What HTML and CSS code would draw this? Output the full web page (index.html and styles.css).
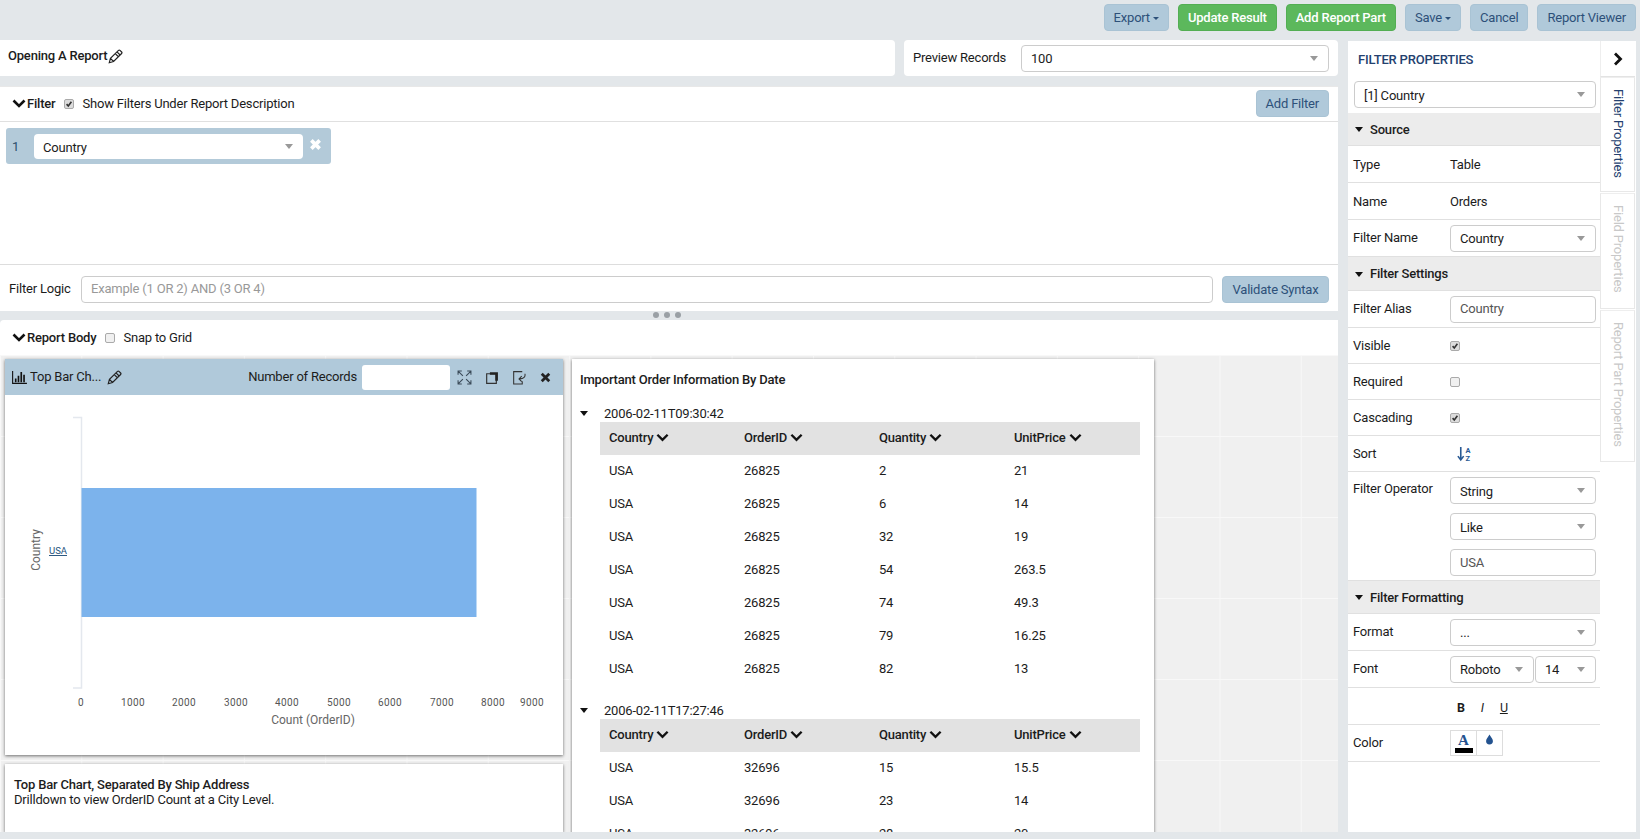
FILE: index.html
```html
<!DOCTYPE html>
<html lang="en">
<head>
<meta charset="utf-8">
<title>Report Designer</title>
<link rel="stylesheet" href="styles.css">
</head>
<body>
<svg class="defs" width="0" height="0" aria-hidden="true">
  <symbol id="chev" viewBox="0 0 14 10"><path d="M1.5 1.5 7 7l5.5-5.5" fill="none" stroke="currentColor" stroke-width="2.6"/></symbol>
  <symbol id="pencil" viewBox="0 0 14 14"><path d="M1.2 12.8 2.300 8.800 9.800 1.300a1 1 0 0 1 1.400 0l1.500 1.500a1 1 0 0 1 0 1.400L5.200 11.700zM2.300 8.800 5.200 11.700M8.400 2.700l2.900 2.900M6.800 4.300l2.900 2.900" fill="none" stroke="currentColor" stroke-width="1.100"/></symbol>
  <symbol id="check" viewBox="0 0 10 10"><path d="M2 5.200 4.100 7.500 8 2.200" fill="none" stroke="#333" stroke-width="2"/></symbol>
</svg>

<header class="topbar">
  <button class="btn">Export<i class="mini-caret"></i></button>
  <button class="btn btn-green">Update Result</button>
  <button class="btn btn-green">Add Report Part</button>
  <button class="btn">Save<i class="mini-caret"></i></button>
  <button class="btn">Cancel</button>
  <button class="btn">Report Viewer</button>
</header>

<main class="main">
  <section class="left">
    <div class="title-row">
      <div class="card title-card"><b>Opening A Report</b><svg class="ic15"><use href="#pencil"/></svg></div>
      <div class="card preview-card">
        <span class="preview-label">Preview Records</span>
        <div class="sel sel-preview"><span>100</span><i class="caret"></i></div>
      </div>
    </div>

    <div class="card filter-card">
      <div class="sec-head filter-head">
        <svg class="chev"><use href="#chev"/></svg><b class="sec-title">Filter</b>
        <span class="cb on cb-gap"><svg><use href="#check"/></svg></span>
        <span>Show Filters Under Report Description</span>
        <button class="btn btn-right">Add Filter</button>
      </div>
      <div class="filter-body">
        <div class="chip">
          <span class="chip-num">1</span>
          <div class="sel sel-chip"><span>Country</span><i class="caret"></i></div>
          <svg class="chip-x" viewBox="0 0 10 10"><path d="M1.800 1.800l6.400 6.400M8.200 1.800l-6.400 6.400" stroke="#fff" stroke-width="2.800" fill="none"/></svg>
        </div>
      </div>
      <div class="logic-row">
        <span class="logic-label">Filter Logic</span>
        <div class="input logic-input">Example (1 OR 2) AND (3 OR 4)</div>
        <button class="btn">Validate Syntax</button>
      </div>
    </div>

    <div class="handle"><i></i><i></i><i></i></div>

    <div class="card report-card">
      <div class="sec-head report-head">
        <svg class="chev"><use href="#chev"/></svg><b class="sec-title">Report Body</b>
        <span class="cb cb-gap"></span>
        <span>Snap to Grid</span>
      </div>
      <div class="canvas">
        <div class="col-a">
          <div class="part chart-part">
            <div class="part-head">
              <svg class="bar-ic" viewBox="0 0 16 14"><path d="M.6 0v13.300H16" fill="none" stroke="#111" stroke-width="1.200"/><path d="M3 8h1.800v4H3zM6 5h1.800v7H6zM9 1h1.800v11H9zM12 4h1.800v8H12z" fill="#111"/></svg>
              <span class="part-name">Top Bar Ch...</span>
              <svg class="ic15 part-pencil"><use href="#pencil"/></svg>
              <span class="records">Number of Records</span>
              <div class="rec-input"></div>
              <svg class="tool first" viewBox="0 0 14 14"><path d="M5.500 5.500 1 1M1 4.500V1h3.500M8.500 5.500 13 1M9.500 1H13v3.500M5.500 8.500 1 13M1 9.500V13h3.500M8.500 8.500 13 13M13 9.500V13H9.500" fill="none" stroke="#3a4a58" stroke-width="1"/></svg>
              <svg class="tool" viewBox="0 0 14 14"><path d="M2.500 3.500h9v9h-9z" fill="none" stroke="#333" stroke-width="1.100"/><path d="M5.500 2h7.500v8h-2.500V4.500h-5z" fill="#222"/></svg>
              <svg class="tool" viewBox="0 0 14 14"><path d="M10.500 1.500H2.500v11.500h8v-2.500" fill="none" stroke="#333" stroke-width="1"/><path d="M13 3.500c.600 2.800-1 4.800-5 4.800M10 5.800 7.500 8.300l2.500 2.500" fill="none" stroke="#333" stroke-width="1"/></svg>
              <svg class="tool" viewBox="0 0 14 14"><path d="M3.500 3.500l7 7M10.500 3.500l-7 7" stroke="#222" stroke-width="2.600" fill="none"/></svg>
            </div>
            <svg class="chart" viewBox="0 0 558 360">
              <path d="M68 22.500h8.500V293H68" fill="none" stroke="#e4e8ee" stroke-width="1.500"/>
              <rect x="76.500" y="93" width="395" height="129" fill="#7cb3ec"/>
              <text class="c-link" x="53" y="159" text-anchor="middle">USA</text>
              <text class="c-title" transform="translate(35 155) rotate(-90)" text-anchor="middle">Country</text>
              <g class="c-tick" text-anchor="middle">
                <text x="76" y="311">0</text><text x="128" y="311">1000</text><text x="179" y="311">2000</text><text x="231" y="311">3000</text><text x="282" y="311">4000</text><text x="334" y="311">5000</text><text x="385" y="311">6000</text><text x="437" y="311">7000</text><text x="488" y="311">8000</text><text x="527" y="311">9000</text>
              </g>
              <text class="c-title" x="308" y="329" text-anchor="middle">Count (OrderID)</text>
            </svg>
          </div>
          <div class="part desc-part">
            <b>Top Bar Chart, Separated By Ship Address</b><br>
            Drilldown to view OrderID Count at a City Level.
          </div>
        </div>

        <div class="part table-part">
          <h3 class="t-title">Important Order Information By Date</h3>
          <div class="group">
            <div class="g-label"><i class="tri"></i>2006-02-11T09:30:42</div>
            <div class="t-grid t-head"><span>Country<svg class="chev-s"><use href="#chev"/></svg></span><span>OrderID<svg class="chev-s"><use href="#chev"/></svg></span><span>Quantity<svg class="chev-s"><use href="#chev"/></svg></span><span>UnitPrice<svg class="chev-s"><use href="#chev"/></svg></span></div>
            <div class="t-grid"><span>USA</span><span>26825</span><span>2</span><span>21</span></div>
            <div class="t-grid"><span>USA</span><span>26825</span><span>6</span><span>14</span></div>
            <div class="t-grid"><span>USA</span><span>26825</span><span>32</span><span>19</span></div>
            <div class="t-grid"><span>USA</span><span>26825</span><span>54</span><span>263.5</span></div>
            <div class="t-grid"><span>USA</span><span>26825</span><span>74</span><span>49.3</span></div>
            <div class="t-grid"><span>USA</span><span>26825</span><span>79</span><span>16.25</span></div>
            <div class="t-grid"><span>USA</span><span>26825</span><span>82</span><span>13</span></div>
          </div>
          <div class="group">
            <div class="g-label"><i class="tri"></i>2006-02-11T17:27:46</div>
            <div class="t-grid t-head"><span>Country<svg class="chev-s"><use href="#chev"/></svg></span><span>OrderID<svg class="chev-s"><use href="#chev"/></svg></span><span>Quantity<svg class="chev-s"><use href="#chev"/></svg></span><span>UnitPrice<svg class="chev-s"><use href="#chev"/></svg></span></div>
            <div class="t-grid"><span>USA</span><span>32696</span><span>15</span><span>15.5</span></div>
            <div class="t-grid"><span>USA</span><span>32696</span><span>23</span><span>14</span></div>
            <div class="t-grid"><span>USA</span><span>32696</span><span>28</span><span>20</span></div>
          </div>
        </div>
      </div>
    </div>
  </section>

  <aside class="panel">
    <div class="p-title">FILTER PROPERTIES</div>
    <div class="p-top"><div class="sel"><span>[1] Country</span><i class="caret"></i></div></div>

    <div class="p-sec"><i class="tri"></i>Source</div>
    <div class="p-row r37 r-src"><span>Type</span><span class="p-val">Table</span></div>
    <div class="p-row r37 r-src"><span>Name</span><span class="p-val">Orders</span></div>
    <div class="p-row r37"><span>Filter Name</span><div class="sel"><span>Country</span><i class="caret"></i></div></div>

    <div class="p-sec sec34"><i class="tri"></i>Filter Settings</div>
    <div class="p-row r37"><span>Filter Alias</span><div class="input muted">Country</div></div>
    <div class="p-row r36"><span>Visible</span><span class="cb on"><svg><use href="#check"/></svg></span></div>
    <div class="p-row r36"><span>Required</span><span class="cb"></span></div>
    <div class="p-row r36"><span>Cascading</span><span class="cb on"><svg><use href="#check"/></svg></span></div>
    <div class="p-row r36"><span>Sort</span>
      <svg class="sort-ic" viewBox="0 0 14 15"><path d="M3.500 1v11M.8 9.500l2.700 3.500 2.700-3.500" fill="none" stroke="#2a5a94" stroke-width="1.500"/><text x="8" y="6.500" class="sort-t">A</text><text x="8" y="14" class="sort-t">Z</text></svg>
    </div>
    <div class="p-row p-stack"><span class="stack-label">Filter Operator</span>
      <div class="stack">
        <div class="sel"><span>String</span><i class="caret"></i></div>
        <div class="sel"><span>Like</span><i class="caret"></i></div>
        <div class="input muted">USA</div>
      </div>
    </div>

    <div class="p-sec"><i class="tri"></i>Filter Formatting</div>
    <div class="p-row r37"><span>Format</span><div class="sel"><span>...</span><i class="caret"></i></div></div>
    <div class="p-row r37"><span>Font</span>
      <div class="font-pair">
        <div class="sel"><span>Roboto</span><i class="caret"></i></div>
        <div class="sel"><span>14</span><i class="caret"></i></div>
      </div>
    </div>
    <div class="p-row r37"><span></span>
      <div class="biu"><b>B</b><i>I</i><u>U</u></div>
    </div>
    <div class="p-row r37"><span>Color</span>
      <div class="swatches">
        <div class="swatch"><span class="sw-a">A</span></div>
        <div class="swatch"><svg class="drop" viewBox="0 0 10 12"><path d="M5 .5C6 3 8.800 5 8.800 7.800a3.800 3.800 0 0 1-7.600 0C1.200 5 4 3 5 .5z" fill="#23528f"/></svg></div>
      </div>
    </div>
  </aside>

  <nav class="tabs">
    <div class="tab-toggle"><svg class="toggle-ic" viewBox="0 0 10 14"><path d="M2 1.500 7.500 7 2 12.500" fill="none" stroke="#111" stroke-width="2.800"/></svg></div>
    <div class="tab active t115"><span>Filter Properties</span></div>
    <div class="tab t114"><span>Field Properties</span></div>
    <div class="tab t152"><span>Report Part Properties</span></div>
  </nav>
</main>
</body>
</html>
```
FILE: styles.css
```css
* { box-sizing: border-box; }
html, body { margin: 0; height: 839px; overflow: hidden; }
body { background: #e3e7ea; font: 13px/16px Roboto, "Liberation Sans", sans-serif; color: #1c1c1c; letter-spacing: -.2px; }
.defs { position: absolute; }
b { font-weight: 500; }

.topbar { height: 41px; display: flex; justify-content: flex-end; gap: 9px; padding: 4px 4px 0 0; align-items: flex-start; }
.btn { height: 27px; padding: 0 9px; border: 1px solid #a9c3d4; border-radius: 4px; background: #b0c9da; color: #2d5079; font: 13px Roboto, sans-serif; letter-spacing: -.2px; white-space: nowrap; }
.btn-green { background: #5cb85c; border-color: #53ae53; color: #fff; font-weight: 500; }
.mini-caret { display: inline-block; margin-left: 3px; border: 3px solid transparent; border-top-color: currentColor; border-bottom: 0; vertical-align: middle; }
.btn-right { margin-left: auto; }

.main { display: flex; height: 791px; }
.left { width: 1339px; display: flex; flex-direction: column; }
.panel { width: 252px; margin-left: 9px; background: #fff; display: flex; flex-direction: column; }
.tabs { width: 36px; background: #fff; display: flex; flex-direction: column; align-items: flex-start; }

.card { background: #fff; }
.title-row { display: flex; gap: 9px; height: 36px; margin-right: 1px; margin-top: -1px; }
.title-card { width: 895px; display: flex; align-items: center; gap: 1px; padding: 0 8px 4px; border-radius: 0 4px 4px 0; }
.preview-card { flex: 1; display: flex; align-items: center; padding: 0 9px; border-radius: 4px; }
.preview-label { width: 108px; }
.sel-preview { flex: 1; }
.ic15 { width: 15px; height: 15px; color: #222; flex: none; }

.sel, .input { height: 27px; border: 1px solid #ccc; border-radius: 4px; background: #fff; display: flex; align-items: center; padding: 0 9px; position: relative; width: 100%; }
.sel span { flex: 1; padding-top: 2px; }
.caret { width: 0; height: 0; border: 4.500px solid transparent; border-top: 5px solid #999; border-bottom: 0; margin-right: 1px; }
.muted { color: #555; }

.filter-card { margin: 10px 1px 0 0; height: 225px; border-top: 1px solid #e8e8e8; display: flex; flex-direction: column; }
.sec-head { display: flex; align-items: center; }
.chev { width: 14px; height: 10px; color: #111; margin-right: 1px; }
.sec-title { font-size: 13px; }
.filter-head { height: 35px; padding: 0 9px 1px 12px; border-bottom: 1px solid #e0e0e0; }
.cb { width: 10px; height: 10px; border: 1px solid #aaa; border-radius: 2px; background: #f0f0f0; display: inline-block; flex: none; }
.cb.on { background: #dcdcdc; }
.cb svg { display: block; width: 8px; height: 8px; }
.cb-gap { margin: 0 8px 0 9px; }

.filter-body { height: 143px; border-bottom: 1px solid #ddd; padding: 6px; }
.chip { width: 325px; height: 36px; background: #b3cad9; border-radius: 3px; display: flex; align-items: center; padding-top: 1px; }
.chip-num { width: 28px; padding-left: 6px; color: #2d4f6d; }
.sel-chip { width: 269px; height: 25px; border: 0; }
.chip-x { width: 13px; height: 13px; margin: -5px 0 0 6px; }

.logic-row { flex: 1; display: flex; align-items: center; padding: 0 9px; margin-top: 2px; }
.logic-label { width: 72px; }
.logic-input { flex: 1; width: auto; color: #999; margin-right: 9px; }
.logic-row .btn { width: 107px; padding: 0; }

.handle { height: 9px; display: flex; justify-content: center; align-items: center; gap: 5px; padding: 0 6px 2px 0; }
.handle i { width: 6px; height: 6px; border-radius: 50%; background: #9aa0a5; }

.report-card { flex: 1; margin-right: 1px; display: flex; flex-direction: column; min-height: 0; overflow: hidden; border-radius: 4px 0 0 0; }
.report-head { height: 35px; flex: none; padding: 0 12px; }
.canvas { flex: 1; min-height: 0; overflow: hidden; display: flex; gap: 9px; padding: 4px 0 0 5px; margin-right: -1px;
  background-color: #f0f0f0;
  background-image: linear-gradient(#f8f8f8 1px, transparent 1px), linear-gradient(90deg, #f8f8f8 1px, transparent 1px);
  background-size: 81.3px 81px; }
.col-a { width: 558px; flex: none; display: flex; flex-direction: column; gap: 9px; }
.part { background: #fff; box-shadow: 0 1px 3px rgba(0,0,0,.55); }
.chart-part { height: 396px; flex: none; }
.part-head { height: 36px; background: #b0c9da; display: flex; align-items: center; padding: 0 10px 0 7px; }
.bar-ic { width: 15px; height: 13px; flex: none; }
.part-name { margin-left: 3px; }
.part-pencil { margin-left: 6px; }
.records { margin-left: auto; }
.rec-input { width: 88px; height: 25px; background: #fff; border-radius: 3px; margin: 0 7px 0 5px; }
.tool { width: 15px; height: 15px; margin-left: 12px; flex: none; }
.tool.first { margin-left: 0; }
.chart { display: block; width: 558px; height: 360px; }
.chart text { font-family: Roboto, sans-serif; letter-spacing: 0; }
.c-tick { font-size: 10px; fill: #555; }
.chart .c-tick text { letter-spacing: .4px; }
.c-title { font-size: 12px; fill: #666; }
.c-link { font-size: 9.500px; fill: #23527c; text-decoration: underline; }
.desc-part { flex: 1; padding: 13px 9px; line-height: 15px; }
.desc-part b { font-weight: 500; }

.table-part { width: 582px; flex: none; height: 640px; padding: 0 14px 0 8px; }
.t-title { font-size: 13px; font-weight: 500; margin: 0; padding-top: 13px; line-height: 16px; height: 46px; }
.group { margin-bottom: 16px; padding-left: 20px; }
.g-label { height: 17px; line-height: 17px; position: relative; padding-left: 4px; }
.g-label .tri { position: absolute; left: -20px; top: 6px; }
.tri { display: inline-block; width: 0; height: 0; border: 4px solid transparent; border-top: 5px solid #111; border-bottom: 0; }
.t-grid { display: grid; grid-template-columns: repeat(4, 135px); height: 33px; align-items: center; padding: 0 0 1px 9px; }
.t-head { background: #e2e2e2; font-weight: 500; }
.chev-s { width: 13px; height: 10px; margin-left: 3px; vertical-align: -1px; color: #111; }

.p-title { height: 35px; padding: 2px 0 0 10px; display: flex; align-items: center; font-weight: 500; color: #24416f; }
.p-top { height: 37px; padding: 5px 4px 0 6px; }
.p-sec { height: 33px; background: #ececec; border-bottom: 1px solid #e0e0e0; display: flex; align-items: center; font-weight: 500; padding: 1px 0 0 7px; }
.sec34 { height: 34px; }
.p-sec .tri { margin-right: 7px; }
.p-row { display: grid; grid-template-columns: 97px 146px; align-items: center; padding-left: 5px; border-bottom: 1px solid #e0e0e0; }
.r37 { height: 37px; }
.r36 { height: 36px; }
.r-src { padding-top: 2px; }
.p-stack { height: 109px; align-items: start; padding-top: 5px; }
.stack-label { margin-top: 4px; }
.stack { display: flex; flex-direction: column; gap: 9px; }
.font-pair { display: flex; gap: 1px; }
.font-pair .sel:first-child { width: 84px; flex: none; }
.font-pair .sel:last-child { width: 61px; flex: none; }
.biu { display: flex; gap: 16px; padding: 3px 0 0 7px; font-size: 12.500px; }
.biu b { font-weight: 700; }
.sort-ic { width: 15px; height: 16px; margin-left: 7px; }
.sort-t { font: 700 7px Roboto, sans-serif; fill: #2a5a94; letter-spacing: 0; }
.swatches { display: flex; }
.swatch { width: 27px; height: 26px; border: 1px solid #ddd; display: flex; justify-content: center; position: relative; }
.swatch + .swatch { margin-left: -1px; }
.sw-a { font: 700 15px/16px "Liberation Serif", serif; color: #23528f; border-bottom: 5px solid #000; width: 18px; text-align: center; height: 21px; margin-top: 1px; letter-spacing: 0; }
.drop { width: 9px; height: 11px; margin-top: 3px; }

.tab-toggle { width: 35px; height: 36px; display: flex; align-items: center; justify-content: center; border-left: 1px solid #eee; border-bottom: 1px solid #e3e3e3; }
.toggle-ic { width: 10px; height: 14px; }
.tab { width: 35px; border: 1px solid #e8e8e8; border-top: 1px solid #eee; display: flex; justify-content: center; padding-top: 11px; color: #c8c8c8; margin-bottom: 1px; }
.tab span { writing-mode: vertical-rl; font-size: 13px; line-height: 16px; }
.tab.active { color: #24416f; }
.t115 { height: 115px; }
.t114 { height: 116px; }
.t152 { height: 152px; }
```
